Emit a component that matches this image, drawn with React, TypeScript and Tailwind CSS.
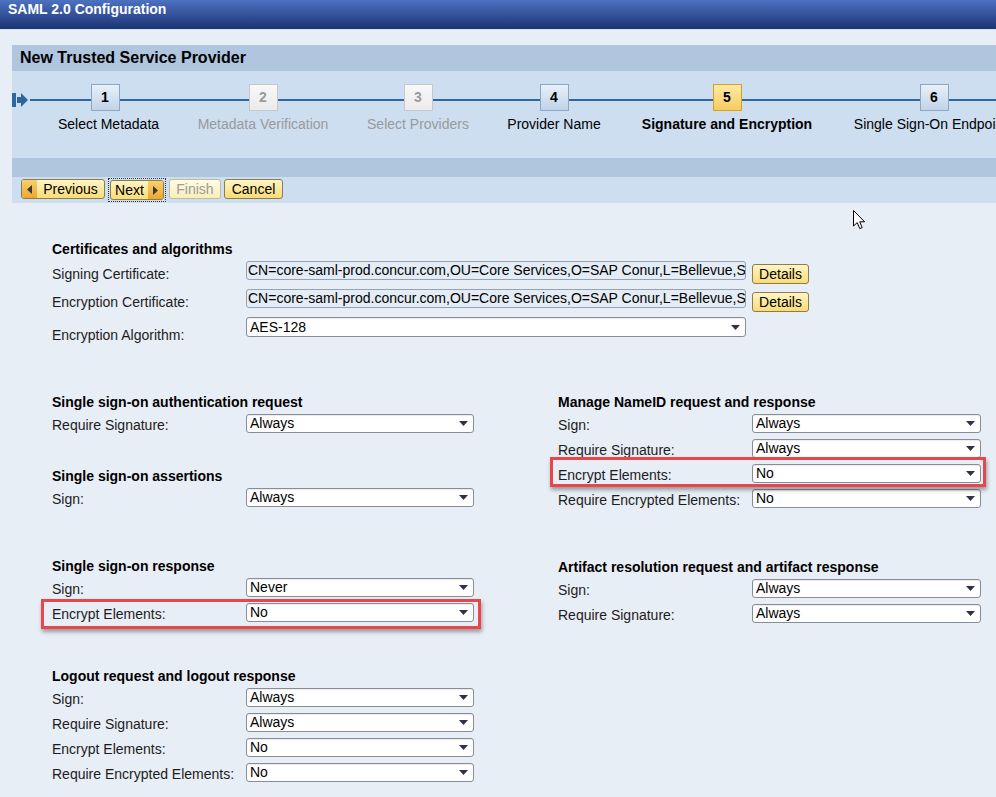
import React from 'react';

// Wizard steps, widths are the column each step sits centred in
const steps = [
  { n: 1, label: 'Select Metadata', state: 'done', w: 'w-[186px]', lx: 'ml-[7px]' },
  { n: 2, label: 'Metadata Verification', state: 'off', w: 'w-[130px]', lx: '' },
  { n: 3, label: 'Select Providers', state: 'off', w: 'w-[180px]', lx: '' },
  { n: 4, label: 'Provider Name', state: 'done', w: 'w-[92px]', lx: '' },
  { n: 5, label: 'Signature and Encryption', state: 'active', w: 'w-[254px]', lx: '' },
  { n: 6, label: 'Single Sign-On Endpoints', state: 'done', w: 'w-[160px]', lx: '' },
];

const CERT = 'CN=core-saml-prod.concur.com,OU=Core Services,O=SAP Conur,L=Bellevue,ST';

const StepBox = ({ n, state }: { n: number; state: string }) => {
  const cls =
    state === 'active'
      ? 'border-[#d6a21c] bg-linear-to-b from-[#fde9a4] to-[#f7cc5c] text-black'
      : state === 'off'
      ? 'border-[#c8c8c8] bg-linear-to-b from-[#f8f8f8] to-[#ebebeb] text-[#9a9a9a]'
      : 'border-[#8ba7c7] bg-linear-to-b from-[#e8f0f9] to-[#c0d3e8] text-black';
  return (
    <div className={`w-[29px] h-[27px] border flex items-center justify-center text-[14px] font-bold ${cls}`}>
      {n}
    </div>
  );
};

const Tri = ({ dir }: { dir: 'left' | 'right' }) => (
  <svg width="5" height="9" viewBox="0 0 5 9">
    {dir === 'left' ? <path d="M5 0V9L0 4.5Z" fill="#3a3a3a" /> : <path d="M0 0V9L5 4.5Z" fill="#3a3a3a" />}
  </svg>
);

const YellowButton = ({
  children,
  disabled,
  arrow,
  className = '',
}: {
  children: React.ReactNode;
  disabled?: boolean;
  arrow?: 'left' | 'right';
  className?: string;
}) => (
  <div
    className={`h-[20px] flex items-stretch justify-between rounded-[3px] border overflow-hidden text-[14px] leading-[18px] ${
      disabled
        ? 'border-[#c4bb9a] bg-linear-to-b from-[#fffbe6] to-[#fbeeb8] text-[#9b9b9b]'
        : 'border-[#8c7d4e] bg-linear-to-b from-[#fff5c4] to-[#f9dc74] text-black'
    } ${className}`}
  >
    {arrow === 'left' && (
      <span className="w-[15px] flex items-center justify-center bg-linear-to-b from-[#f9cf6a] to-[#eea72a]">
        <Tri dir="left" />
      </span>
    )}
    <span className="flex-1 flex items-center justify-center">{children}</span>
    {arrow === 'right' && (
      <span className="w-[15px] flex items-center justify-center bg-linear-to-b from-[#f9cf6a] to-[#eea72a]">
        <Tri dir="right" />
      </span>
    )}
  </div>
);

const Select = ({ value, w = 'w-[228px]', h = 'h-[19px]' }: { value: string; w?: string; h?: string }) => (
  <div
    className={`${w} ${h} bg-white border border-[#878d98] rounded-[3px] flex items-center justify-between pl-[3px] pr-[5px] text-[14px] text-black shadow-[inset_0_1px_1px_rgba(0,0,0,0.08)]`}
  >
    <span className="leading-[17px]">{value}</span>
    <svg width="9" height="5" viewBox="0 0 9 5">
      <path d="M0 0H9L4.5 5Z" fill="#2f3249" />
    </svg>
  </div>
);

const Row = ({ label, value, wide }: { label: string; value: string; wide?: boolean }) => (
  <div className="flex items-center h-[19px] w-fit">
    <span className="w-[194px] shrink-0 text-[14px] leading-[16px] text-[#1c1c1c] pt-[2px] whitespace-nowrap">
      {label}
    </span>
    <Select value={value} w={wide ? 'w-[229px]' : 'w-[228px]'} />
  </div>
);

const Heading = ({ children }: { children: React.ReactNode }) => (
  <div className="h-[16px] leading-[16px] text-[14px] font-bold text-black mb-[4px] whitespace-nowrap">{children}</div>
);

// Red annotation frame drawn on top of a row
const Highlight = ({ className }: { className: string }) => (
  <span
    className={`pointer-events-none absolute border-[3px] border-[#e9464b] shadow-[1px_3px_4px_rgba(0,0,0,0.35)] ${className}`}
  />
);

export default function App() {
  return (
    <div className="relative w-[996px] h-[797px] overflow-hidden bg-[#e8eef6] font-['Liberation_Sans',Arial,sans-serif]">
      {/* window title */}
      <div className="h-[30px] bg-linear-to-b from-[#4d72c2] to-[#1b3574] border-b border-[#d9e3ef] pl-[8px] text-[14px] leading-[18px] font-bold text-white">
        SAML 2.0 Configuration
      </div>

      <div className="pt-[15px] pl-[12px]">
        <div className="bg-[#afc6de] h-[26px] pl-[8px] flex items-center">
          <span className="text-[16px] font-bold text-black">New Trusted Service Provider</span>
        </div>

        {/* stepper */}
        <div className="relative h-[87px] bg-[#cddef0] overflow-hidden">
          <div className="absolute left-[18px] right-0 top-[28px] h-[2px] bg-[#2f66a0]" />
          <svg className="absolute left-0 top-[22px]" width="17" height="14" viewBox="0 0 17 14">
            <rect x="0" y="0" width="4" height="14" fill="#2f66a0" />
            <rect x="5" y="4" width="5" height="6" fill="#2f66a0" />
            <path d="M9 0L16 7L9 14Z" fill="#2f66a0" />
          </svg>
          <div className="relative flex">
            {steps.map((s) => (
              <div key={s.n} className={`${s.w} shrink-0 flex flex-col items-center pt-[13px]`}>
                <StepBox n={s.n} state={s.state} />
                <span
                  className={`mt-[5px] text-[14px] leading-[16px] whitespace-nowrap ${s.lx} ${
                    s.state === 'off' ? 'text-[#9a9a9a]' : 'text-black'
                  } ${s.state === 'active' ? 'font-bold' : ''}`}
                >
                  {s.label}
                </span>
              </div>
            ))}
          </div>
        </div>
        <div className="h-[19px] bg-[#afc6de]" />

        {/* wizard buttons */}
        <div className="h-[26px] bg-[#cddef0] flex items-start pt-[2px] pl-[9px] gap-[3px]">
          <YellowButton arrow="left" className="w-[84px]">
            Previous
          </YellowButton>
          <div className="border border-dotted border-[#333] p-[1px] -mt-[1px]">
            <YellowButton arrow="right" className="w-[54px]">
              Next
            </YellowButton>
          </div>
          <YellowButton disabled className="w-[52px]">
            Finish
          </YellowButton>
          <YellowButton className="w-[59px]">Cancel</YellowButton>
        </div>
      </div>

      {/* form */}
      <div className="pl-[52px] pt-[38px]">
        <Heading>Certificates and algorithms</Heading>
        <div className="flex flex-col gap-[8px]">
          {['Signing Certificate:', 'Encryption Certificate:'].map((l) => (
            <div key={l} className="flex items-start h-[20px]">
              <span className="w-[194px] shrink-0 text-[14px] leading-[16px] text-[#1c1c1c] pt-[5px]">{l}</span>
              <div className="w-[500px] h-[19px] overflow-hidden whitespace-nowrap bg-[#e4ecf5] border border-[#96a2b2] rounded-[3px] pl-[1px] text-[14px] leading-[17px] text-black">
                {CERT}
              </div>
              <YellowButton className="ml-[6px] mt-[3px] h-[19px] w-[57px]">Details</YellowButton>
            </div>
          ))}
          <div className="flex items-start h-[20px]">
            <span className="w-[194px] shrink-0 text-[14px] leading-[16px] text-[#1c1c1c] pt-[10px]">
              Encryption Algorithm:
            </span>
            <Select value="AES-128" w="w-[500px]" h="h-[20px]" />
          </div>
        </div>

        <div className="flex mt-[57px]">
          <div className="w-[506px] shrink-0">
            <Heading>Single sign-on authentication request</Heading>
            <Row label="Require Signature:" value="Always" />

            <div className="mt-[35px]">
              <Heading>Single sign-on assertions</Heading>
              <Row label="Sign:" value="Always" />
            </div>

            <div className="mt-[51px]">
              <Heading>Single sign-on response</Heading>
              <div className="flex flex-col gap-[6px]">
                <Row label="Sign:" value="Never" />
                <div className="relative w-fit">
                  <Row label="Encrypt Elements:" value="No" />
                  <Highlight className="-left-[11px] -right-[7px] -top-[4px] -bottom-[7px]" />
                </div>
              </div>
            </div>

            <div className="mt-[46px]">
              <Heading>Logout request and logout response</Heading>
              <div className="flex flex-col gap-[6px]">
                <Row label="Sign:" value="Always" />
                <Row label="Require Signature:" value="Always" />
                <Row label="Encrypt Elements:" value="No" />
                <Row label="Require Encrypted Elements:" value="No" />
              </div>
            </div>
          </div>

          <div>
            <Heading>Manage NameID request and response</Heading>
            <div className="flex flex-col gap-[6px]">
              <Row label="Sign:" value="Always" wide />
              <Row label="Require Signature:" value="Always" wide />
              <div className="relative w-fit">
                <Row label="Encrypt Elements:" value="No" wide />
                <Highlight className="-left-[8px] -right-[5px] -top-[7px] -bottom-[4px]" />
              </div>
              <Row label="Require Encrypted Elements:" value="No" wide />
            </div>

            <div className="mt-[51px]">
              <Heading>Artifact resolution request and artifact response</Heading>
              <div className="flex flex-col gap-[6px]">
                <Row label="Sign:" value="Always" wide />
                <Row label="Require Signature:" value="Always" wide />
              </div>
            </div>
          </div>
        </div>
      </div>

      {/* mouse pointer */}
      <svg className="absolute left-[853px] top-[210px]" width="13" height="20" viewBox="0 0 13 20">
        <path
          d="M0.5 0.5V16L4.2 12.6L6.8 18.6L9.2 17.6L6.7 11.8H11.6Z"
          fill="#fff"
          stroke="#000"
          strokeWidth="1"
          strokeLinejoin="round"
        />
      </svg>
    </div>
  );
}
